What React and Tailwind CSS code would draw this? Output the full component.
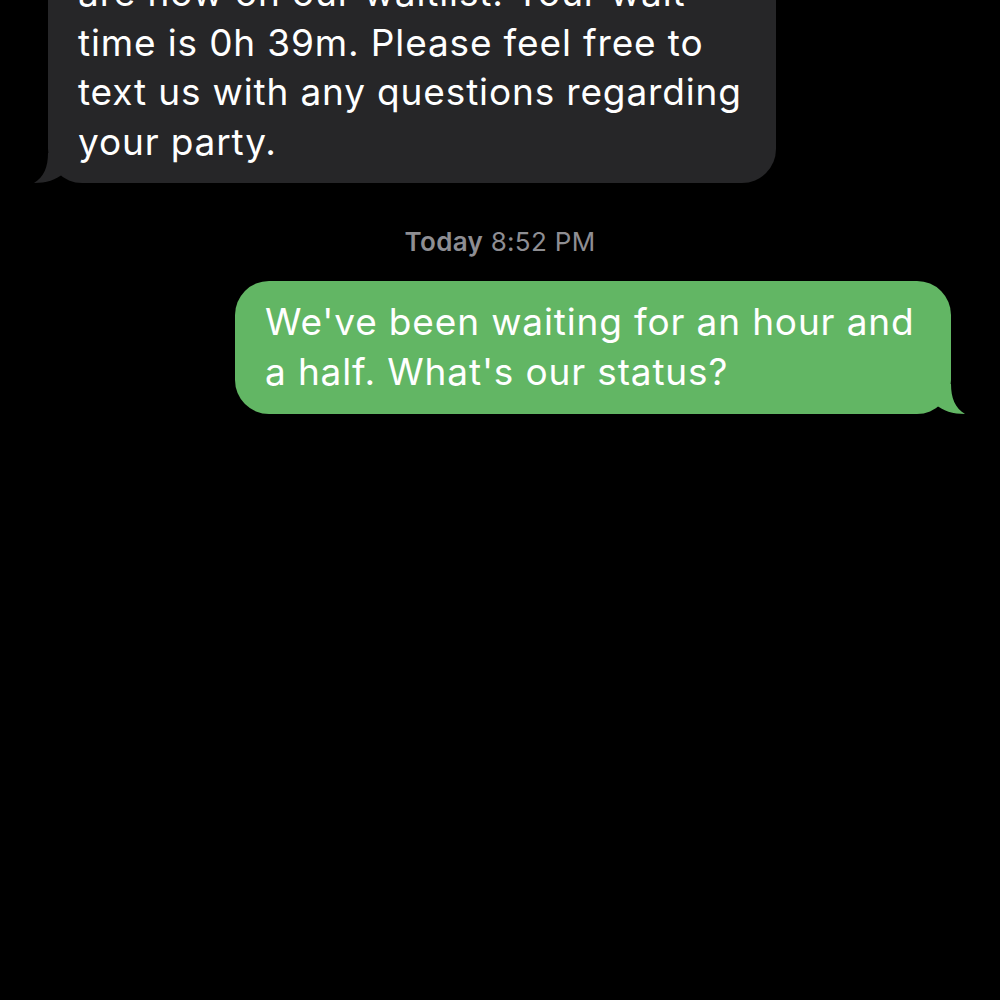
export default function App() {
  const font = { fontFamily: 'Inter, "Liberation Sans", sans-serif' };
  return (
    <div className="w-[1000px] h-[1000px] bg-black overflow-hidden relative" style={font}>
      <div className="flex flex-col">
        {/* gray incoming bubble, top cut off */}
        <div className="relative ml-[48px] mt-[-60px] w-[728px] h-[243px] rounded-[34px] bg-[#262628] pl-[30px] pt-[28px] text-white text-[37px] leading-[49.5px] tracking-[0.85px]">
          <div className="whitespace-nowrap">are now on our waitlist. Your wait</div>
          <div className="whitespace-nowrap">time is 0h 39m. Please feel free to</div>
          <div className="whitespace-nowrap">text us with any questions regarding</div>
          <div className="whitespace-nowrap">your party.</div>
          <svg className="absolute left-[-14px] bottom-0" width="40" height="30" viewBox="0 0 40 30">
            <path d="M14 0 C14 14 10 24 0 30 C12 30 22 27 30 20 L40 20 L40 0 Z" fill="#262628" />
          </svg>
        </div>
        {/* timestamp */}
        <div className="mt-[44px] text-center text-[26px] leading-[30px] text-[#8e8e93] tracking-[0.3px]">
          <span className="font-semibold">Today</span> 8:52 PM
        </div>
        {/* green outgoing bubble */}
        <div className="relative ml-[235px] mt-[24px] w-[716px] h-[133px] rounded-[34px] bg-[#62b664] pl-[30px] pt-[16px] text-white text-[37px] leading-[50px] tracking-[0.85px]">
          <div className="whitespace-nowrap">We've been waiting for an hour and</div>
          <div className="whitespace-nowrap">a half. What's our status?</div>
          <svg className="absolute right-[-14px] bottom-0" width="40" height="30" viewBox="0 0 40 30">
            <path d="M26 0 C26 14 30 24 40 30 C28 30 18 27 10 20 L0 20 L0 0 Z" fill="#62b664" />
          </svg>
        </div>
      </div>
    </div>
  );
}
